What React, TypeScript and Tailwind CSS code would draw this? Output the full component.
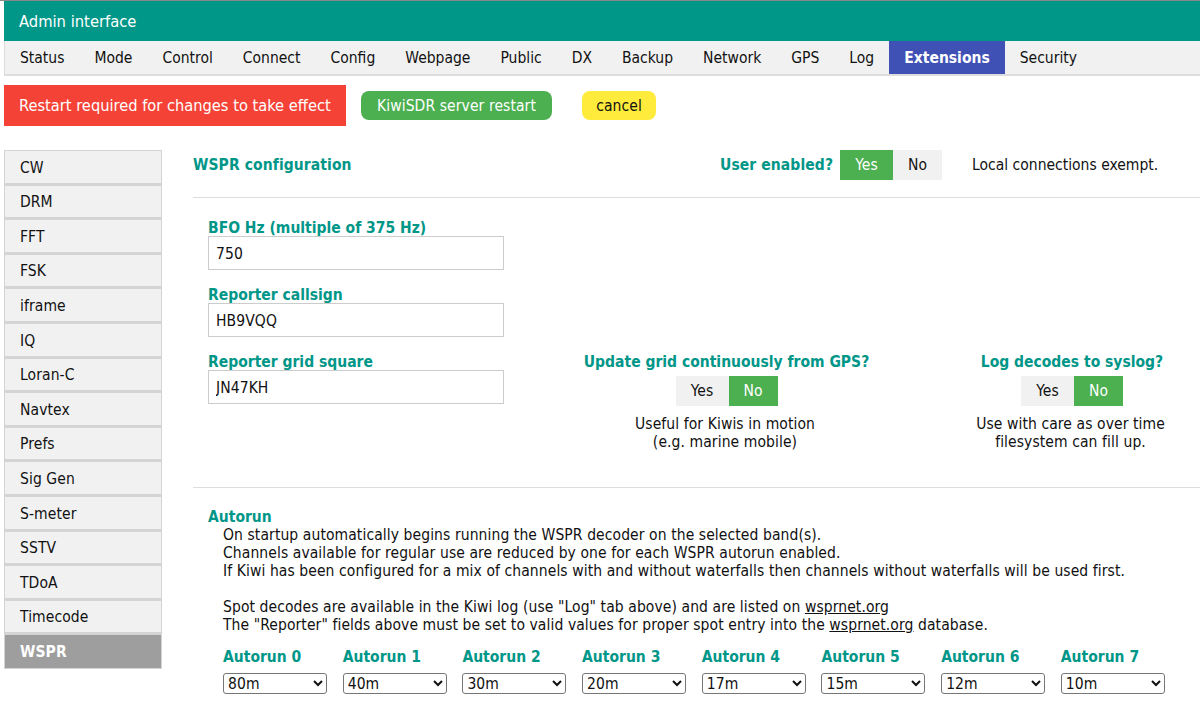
const tabs = ['Status', 'Mode', 'Control', 'Connect', 'Config', 'Webpage', 'Public', 'DX', 'Backup', 'Network', 'GPS', 'Log', 'Extensions', 'Security'];
const extensions = ['CW', 'DRM', 'FFT', 'FSK', 'iframe', 'IQ', 'Loran-C', 'Navtex', 'Prefs', 'Sig Gen', 'S-meter', 'SSTV', 'TDoA', 'Timecode', 'WSPR'];
const bands = ['80m', '40m', '30m', '20m', '17m', '15m', '12m', '10m'];

function YesNo({ yes }: { yes: boolean }) {
  const on = 'bg-[#4caf50] text-white';
  const off = 'bg-[#f1f1f1] text-[#111]';
  return (
    <div className="flex h-[30px] leading-[30px]">
      <button className={`w-[53px] text-center ${yes ? on : off}`}>Yes</button>
      <button className={`w-[49px] text-center ${yes ? off : on}`}>No</button>
    </div>
  );
}

function Field({ label, value }: { label: string; value: string }) {
  return (
    <div className="w-[296px]">
      <div className="h-[18px] font-bold leading-[20px] tracking-normal text-[#009688]">{label}</div>
      <input
        readOnly
        value={value}
        className="h-[34px] w-full border border-[#ccc] pl-[7px] pt-[2px] text-[#111] outline-none"
      />
    </div>
  );
}

export default function App() {
  return (
    <div className="h-[706px] w-[1200px] overflow-hidden bg-white font-['DejaVu_Sans_Condensed','DejaVu_Sans',sans-serif] text-[15.5px] tracking-[0.09px] text-[#111]">
      <div className="h-px bg-[#888]" />
      <div className="ml-1 flex h-10 items-center bg-[#009688] pl-[15px] pt-[2px] text-[16.4px] tracking-normal text-white">Admin interface</div>
      <div className="ml-1 flex h-[35px] border-b-2 border-l border-[#ddd] bg-[#f1f1f1] tracking-normal">
        {tabs.map((t) => (
          <div
            key={t}
            className={
              t === 'Extensions'
                ? 'flex items-center bg-[#3f51b5] px-[15px] pt-[3px] font-bold text-white'
                : 'flex items-center px-[15px] pt-[3px] text-[#111]'
            }
          >
            {t}
          </div>
        ))}
      </div>

      <div className="mt-[9px] flex h-[41px] items-center">
        <div className="ml-1 flex h-[41px] w-[342px] items-center bg-[#f44336] pl-[15px] pt-[2px] text-[16.3px] tracking-normal text-white">
          Restart required for changes to take effect
        </div>
        <button className="ml-[15px] h-[29px] w-[191px] rounded-lg bg-[#4caf50] pt-[3px] text-center text-white">KiwiSDR server restart</button>
        <button className="ml-[30px] h-[29px] w-[74px] rounded-lg bg-[#ffeb3b] pt-[3px] text-center text-[#111]">cancel</button>
      </div>

      <div className="mt-6 flex">
        <div className="ml-1 w-[158px]">
          {extensions.map((e) => (
            <div
              key={e}
              className={
                e === 'WSPR'
                  ? 'flex h-[34.6px] items-center border border-[#d4d4d4] bg-[#9e9e9e] pl-[15px] pt-[3px] font-bold text-white'
                  : 'flex h-[34.6px] items-center border border-b-2 border-[#d4d4d4] bg-[#f1f1f1] pl-[15px] pt-[3px] text-[#111]'
              }
            >
              {e}
            </div>
          ))}
        </div>

        <div className="ml-[31px] flex-1">
          <div className="flex h-[48px] border-b border-[#ddd] pb-[18px]">
            <div className="flex h-[29px] w-[527px] items-center pt-[2px] font-bold text-[#009688]">WSPR configuration</div>
            <div className="flex h-[29px] items-center">
              <span className="mr-[7px] pt-[2px] font-bold text-[#009688]">User enabled?</span>
              <YesNo yes={true} />
              <span className="ml-[30px] pt-[2px] tracking-normal">Local connections exempt.</span>
            </div>
          </div>

          <div className="flex h-[290px] border-b border-[#ddd] pl-[15px] pt-[20px]">
            <div className="flex w-[296px] flex-col gap-[15px]">
              <Field label="BFO Hz (multiple of 375 Hz)" value="750" />
              <Field label="Reporter callsign" value="HB9VQQ" />
              <Field label="Reporter grid square" value="JN47KH" />
            </div>
            <div className="ml-[74px] mt-[134px] flex w-[297px] flex-col items-center">
              <div className="h-[23px] font-bold leading-[20px] tracking-normal text-[#009688]">Update grid continuously from GPS?</div>
              <div className="mt-[1px]"><YesNo yes={false} /></div>
              <div className="mt-[9px] pr-[3px] text-center leading-[18px]">Useful for Kiwis in motion<br />(e.g. marine mobile)</div>
            </div>
            <div className="ml-[97px] mt-[134px] flex w-[200px] flex-col items-center">
              <div className="h-[23px] font-bold leading-[20px] tracking-normal text-[#009688]">Log decodes to syslog?</div>
              <div className="mt-[1px]"><YesNo yes={false} /></div>
              <div className="mt-[9px] pr-[3px] text-center leading-[18px]">Use with care as over time<br />filesystem can fill up.</div>
            </div>
          </div>

          <div className="pl-[15px] pt-[20px]">
            <div className="h-[18px] font-bold leading-[18px] tracking-normal text-[#009688]">Autorun</div>
            <div className="pl-[15px] leading-[18px]">
              <div>On startup automatically begins running the WSPR decoder on the selected band(s).</div>
              <div>Channels available for regular use are reduced by one for each WSPR autorun enabled.</div>
              <div>If Kiwi has been configured for a mix of channels with and without waterfalls then channels without waterfalls will be used first.</div>
              <div className="h-[18px]" />
              <div>Spot decodes are available in the Kiwi log (use "Log" tab above) and are listed on <a className="underline">wsprnet.org</a></div>
              <div>The "Reporter" fields above must be set to valid values for proper spot entry into the <a className="underline">wsprnet.org</a> database.</div>
            </div>
            <div className="ml-[15px] mt-[13px] grid grid-cols-[repeat(8,119.7px)]">
              {bands.map((b, i) => (
                <div key={b}>
                  <div className="h-[26px] font-bold leading-[20px] tracking-normal text-[#009688]">Autorun {i}</div>
                  <select defaultValue={b} className="h-[21px] w-[104px] rounded-[3px] border border-[#767676] bg-white text-[#111]">
                    <option>{b}</option>
                  </select>
                </div>
              ))}
            </div>
          </div>
        </div>
      </div>
    </div>
  );
}
